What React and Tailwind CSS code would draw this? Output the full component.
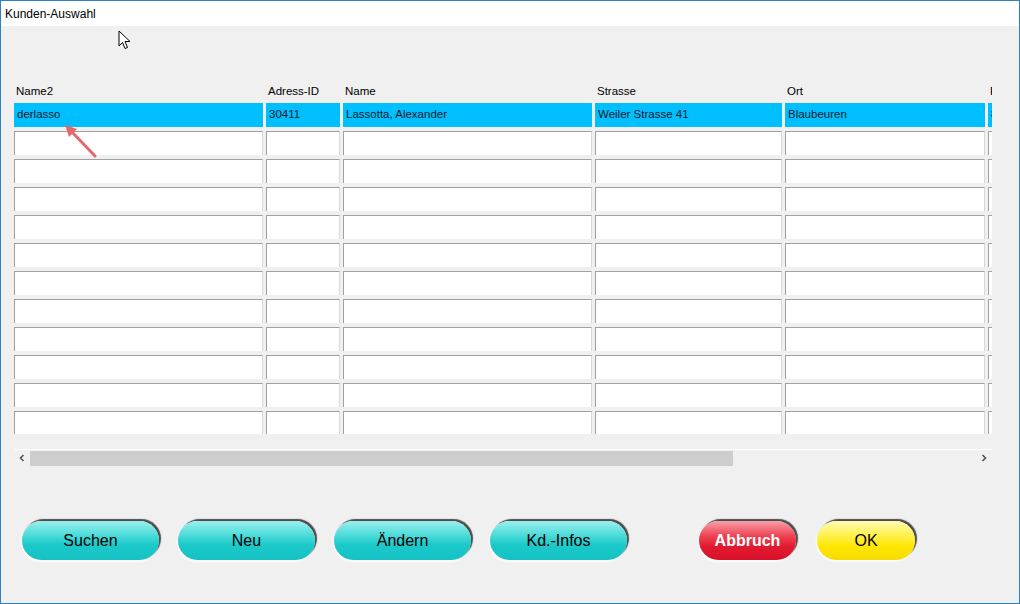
import React from "react";

const COLS = [
  { label: "Name2", w: "w-[249px]", value: "derlasso" },
  { label: "Adress-ID", w: "w-[74px]", value: "30411" },
  { label: "Name", w: "w-[249px]", value: "Lassotta, Alexander" },
  { label: "Strasse", w: "w-[187px]", value: "Weiler Strasse 41" },
  { label: "Ort", w: "w-[200px]", value: "Blaubeuren" },
  { label: "PLZ", w: "w-[60px]", value: "89143" },
];

const ROWS = Array.from({ length: 12 }, (_, i) => i);

const TEAL =
  "bg-[linear-gradient(to_bottom,#9af0ee_0%,#4fdcda_35%,#1ccaca_60%,#14c2c4_100%)] text-black";

function PillButton({ children, className }) {
  return (
    <button
      className={
        "h-[39px] rounded-full text-[16px] leading-none shadow-[2px_-2px_1px_#4b4b4b,-1px_2px_2px_#ffffff] " +
        className
      }
    >
      {children}
    </button>
  );
}

export default function App() {
  return (
    <div
      className="relative w-[1020px] h-[604px] border border-[#2c80c4] bg-[#f0f0f0] flex flex-col overflow-hidden"
      style={{ fontFamily: '"Liberation Sans", Arial, sans-serif' }}
    >
      {/* title bar */}
      <div className="h-[25px] bg-white flex items-center px-[4px] text-[12px] text-black shrink-0">
        Kunden-Auswahl
      </div>

      {/* grid */}
      <div className="ml-[13px] mt-[56px] w-[978px] h-[352px] overflow-hidden">
        <div className="flex gap-[3px] h-[21px] items-start">
          {COLS.map((c) => (
            <div key={c.label} className={c.w + " shrink-0 px-[2px] text-[11.5px] text-black leading-[16px] pt-[1px]"}>
              {c.label}
            </div>
          ))}
        </div>
        <div className="flex flex-col gap-[4px]">
          {ROWS.map((r) => (
            <div key={r} className="flex gap-[3px] h-[24px]">
              {COLS.map((c) =>
                r === 0 ? (
                  <div
                    key={c.label}
                    className={c.w + " shrink-0 bg-[#00bfff] px-[3px] text-[11.5px] text-[#0a1a2a] flex items-center"}
                  >
                    {c.value}
                  </div>
                ) : (
                  <div
                    key={c.label}
                    className={
                      c.w +
                      " shrink-0 bg-white border-t border-l border-t-[#a0a0a0] border-l-[#a0a0a0] border-r border-r-[#d8d8d8]"
                    }
                  />
                )
              )}
            </div>
          ))}
        </div>
      </div>

      {/* horizontal scrollbar */}
      <div className="ml-[13px] mt-[15px] w-[978px] h-[17px] border-t border-white flex items-center">
        <div className="w-[16px] h-full flex items-center justify-center">
          <svg width="8" height="8" viewBox="0 0 8 8">
            <path d="M5.5 1 L2.5 4 L5.5 7" fill="none" stroke="#555" strokeWidth="1.6" />
          </svg>
        </div>
        <div className="w-[703px] h-[15px] bg-[#cdcdcd]" />
        <div className="flex-1" />
        <div className="w-[16px] h-full flex items-center justify-center">
          <svg width="8" height="8" viewBox="0 0 8 8">
            <path d="M2.5 1 L5.5 4 L2.5 7" fill="none" stroke="#555" strokeWidth="1.6" />
          </svg>
        </div>
      </div>

      {/* buttons */}
      <div className="flex items-center ml-[21px] mt-[55px]">
        <div className="flex gap-[19px]">
          <PillButton className={"w-[137px] " + TEAL}>Suchen</PillButton>
          <PillButton className={"w-[137px] " + TEAL}>Neu</PillButton>
          <PillButton className={"w-[137px] " + TEAL}>Ändern</PillButton>
          <PillButton className={"w-[137px] " + TEAL}>Kd.-Infos</PillButton>
        </div>
        <div className="flex gap-[21px] ml-[72px]">
          <PillButton className="w-[97px] font-bold text-white bg-[linear-gradient(to_bottom,#f7a0a8_0%,#ee4454_38%,#e21a30_65%,#d8102a_100%)]">
            Abbruch
          </PillButton>
          <PillButton className="w-[98px] text-black bg-[linear-gradient(to_bottom,#fffbb0_0%,#fff04a_38%,#ffe600_65%,#f4dc00_100%)]">
            OK
          </PillButton>
        </div>
      </div>

      {/* mouse cursor */}
      <svg className="absolute left-[117px] top-[29px]" width="14" height="20" viewBox="0 0 14 20">
        <path d="M1 1 L1 16 L4.5 12.5 L7 18.5 L9.5 17.5 L7 11.5 L12 11.5 Z" fill="#fff" stroke="#000" strokeWidth="1" strokeLinejoin="round" />
      </svg>

      {/* annotation arrow */}
      <svg className="absolute left-[55px] top-[115px]" width="50" height="50" viewBox="0 0 50 50">
        <line x1="39" y1="40" x2="15" y2="15" stroke="#e4686c" strokeWidth="3" strokeLinecap="round" />
        <path d="M9 9 L21 13 L13 21 Z" fill="#e4686c" />
      </svg>
    </div>
  );
}
